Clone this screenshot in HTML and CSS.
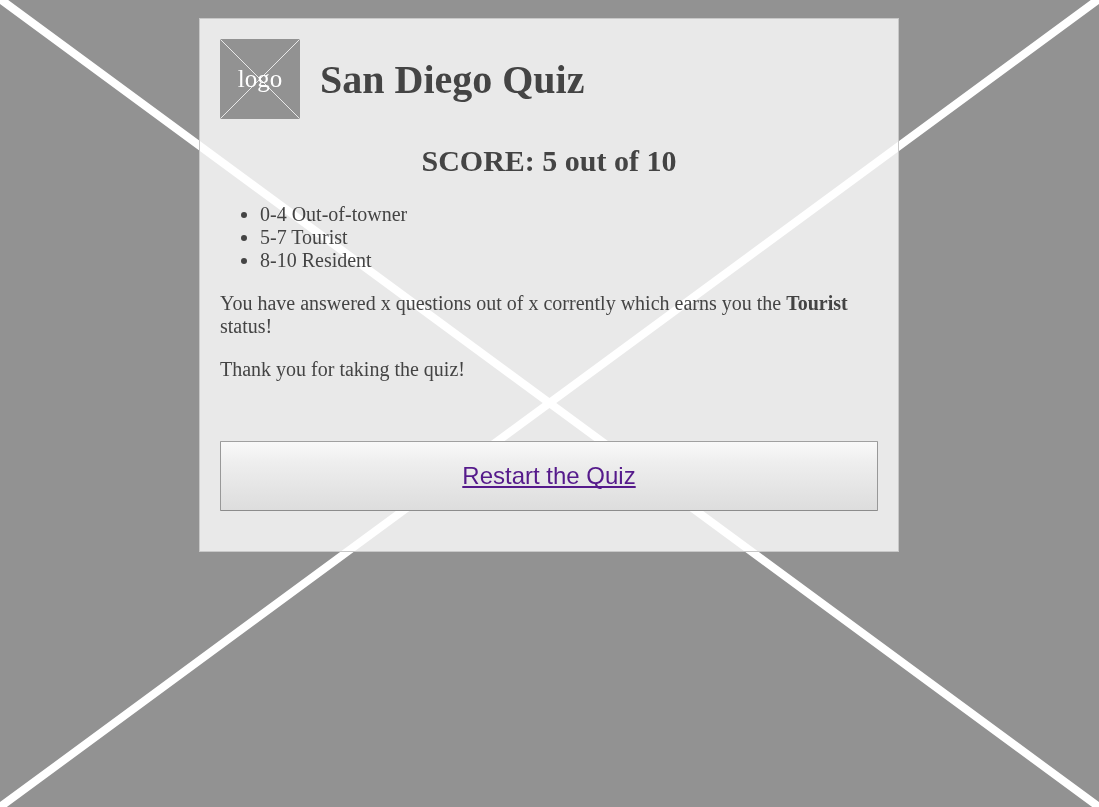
FILE: index.html
```html
<!DOCTYPE html>
<html lang="en">
<head>
<meta charset="utf-8">
<title>San Diego Quiz</title>
<link rel="stylesheet" href="styles.css">
</head>
<body>
<svg class="backdrop" viewBox="0 0 1099 807" preserveAspectRatio="none" aria-hidden="true">
<path d="M-4 -4L1103 810M-4 810L1103 -4"/>
</svg>
<main class="card">
<header class="header">
<svg class="logo" viewBox="0 0 80 80" role="img" aria-label="logo">
<rect class="logo-bg" width="80" height="80" rx="1"/>
<path class="logo-cross" d="M.5 .5L79.5 79.5M.5 79.5L79.5 .5"/>
<text class="logo-text" x="40" y="48">logo</text>
</svg>
<h1 class="title">San Diego Quiz</h1>
</header>
<h2 class="score">SCORE: 5 out of 10</h2>
<ul class="ranks">
<li>0-4 Out-of-towner</li>
<li>5-7 Tourist</li>
<li>8-10 Resident</li>
</ul>
<p class="text">You have answered x questions out of x corrently which earns you the <strong>Tourist</strong> status!</p>
<p class="text">Thank you for taking the quiz!</p>
<div class="button"><a class="link" href="#">Restart the Quiz</a></div>
</main>
</body>
</html>
```
FILE: styles.css
```css
html, body {
  height: 100%;
}
body {
  margin: 0;
  overflow: hidden;
  background: #929292;
  color: #444;
  font: 20px/23px "Liberation Serif", "Times New Roman", serif;
}
.backdrop {
  position: fixed;
  inset: 0;
  width: 100%;
  height: 100%;
  z-index: -1;
  fill: none;
  stroke: #fff;
  stroke-width: 8;
}
.card {
  box-sizing: border-box;
  width: 700px;
  height: 534px;
  margin: 18px 0 0 199px;
  float: left;
  padding: 20px;
  border: 1px solid #c8c8c8;
  background: rgba(255, 255, 255, .8);
  background-clip: padding-box;
}
.header {
  display: flex;
  align-items: center;
  gap: 20px;
  height: 80px;
}
.logo {
  width: 80px;
  height: 80px;
}
.logo-bg {
  fill: #929292;
}
.logo-cross {
  stroke: #e8e8e8;
  stroke-width: 1;
}
.logo-text {
  fill: #fff;
  font-size: 25px;
  text-anchor: middle;
}
.title {
  margin: 2px 0 0;
  font-size: 40px;
  line-height: 46px;
}
.score {
  margin: 25px 0;
  font-size: 30px;
  line-height: 34px;
  text-align: center;
}
.ranks {
  margin: 0 0 20px;
  padding-left: 40px;
}
.text {
  margin: 0 0 20px;
}
.button {
  box-sizing: border-box;
  display: flex;
  align-items: center;
  justify-content: center;
  height: 70px;
  margin-top: 60px;
  border: 1px solid;
  border-color: #a0a0a0 #989898 #8c8c8c;
  border-radius: 1px;
  background: linear-gradient(#f9f9f9, #eee 30%, #ddd);
}
.link {
  color: #551a8b;
  font: 24px/28px "Liberation Sans", Arial, sans-serif;
  text-decoration: underline 2px;
  text-underline-offset: 2px;
  text-decoration-skip-ink: none;
}
```
